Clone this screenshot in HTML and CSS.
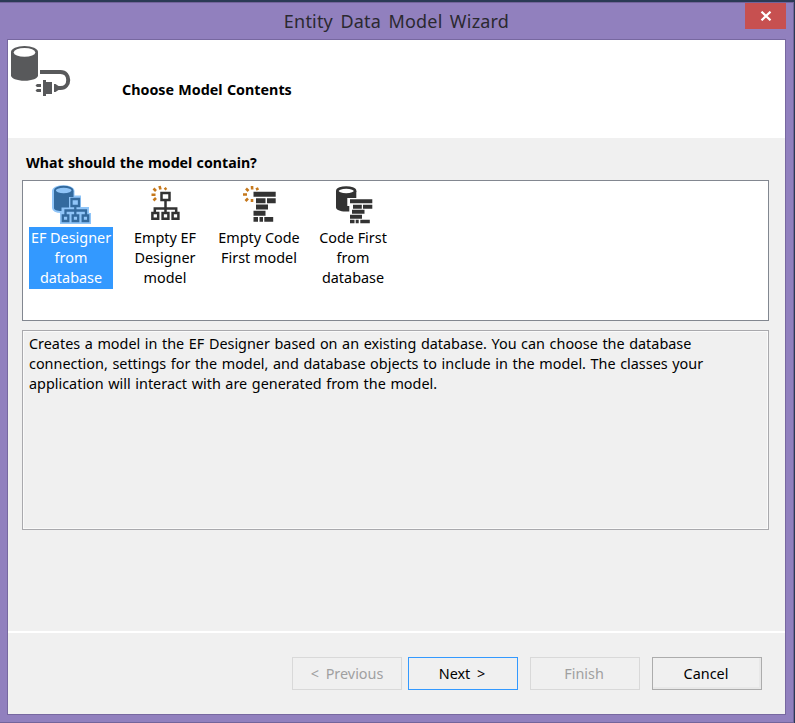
FILE: index.html
```html
<!DOCTYPE html>
<html lang="en">
<head>
<meta charset="utf-8">
<title>Entity Data Model Wizard</title>
<link rel="stylesheet" href="styles.css">
</head>
<body>
<div class="window">
  <header class="titlebar">
    <h1 class="title">Entity Data Model Wizard</h1>
    <button class="close" aria-label="Close">
      <svg width="12" height="10" viewBox="0 0 12 10"><path d="M1.5 .7 10.5 9.3M10.5 .7 1.5 9.3" stroke="#fff" stroke-width="2.2" fill="none"/></svg>
    </button>
  </header>
  <main class="client">
    <section class="banner">
      <svg class="banner-icon" width="64" height="56" viewBox="8 44 64 56">
        <path d="M11 52v23.500c0 2.800 6 5.300 13.500 5.300S38 78.300 38 75.500V52z" fill="#58595b"/>
        <ellipse cx="24.500" cy="52" rx="13.500" ry="6" fill="#58595b"/>
        <ellipse cx="24.500" cy="52.400" rx="10.800" ry="4.400" fill="#fff"/>
        <path d="M40 72h20.500c10.300 0 10.300 16 0 16H57" fill="none" stroke="#58595b" stroke-width="4"/>
        <path d="M54 84h1.500l3 2v4l-3 2H54zM43 80h3v2h6v12h-6v2h-3zM37 84h4v3h-4l-1.500-1.500zM37 89h4v3h-4l-1.500-1.500z" fill="#58595b"/>
      </svg>
      <h2 class="heading">Choose Model Contents</h2>
    </section>
    <section class="body">
      <h3 class="question">What should the model contain?</h3>
      <div class="list">
        <div class="item selected">
          <svg width="40" height="40" viewBox="51 184 40 40">
            <path d="M53 191c0-6.500 20.500-6.500 20.500 0v5.500H80v11.500h8v6h2v9H61v-11c-5 0-8-2-8-4z" fill="#90c5f8" stroke="#90c5f8" stroke-width="2"/>
            <path d="M54 191v17c0 2 3 3 7.500 3v-3.500h7.500V197h4.500v-6z" fill="#336a9e"/>
            <ellipse cx="63.700" cy="190.500" rx="8.800" ry="3.700" fill="#90c5f8" stroke="#336a9e" stroke-width="2"/>
            <g fill="none" stroke="#336a9e" stroke-width="2.300"><path d="M71.500 199h7.500v7h-7.500zM75.300 207v8M65.500 215v-4.500h20.500v4.500M62.800 215.500h5.500v5.500h-5.500zM72.700 215.500h5.500v5.500h-5.500zM82.700 215.500h5.500v5.500h-5.500z"/></g>
          </svg>
          <p class="label"><span>EF Designer</span><span>from</span><span>database</span></p>
        </div>
        <div class="item">
          <svg width="40" height="40" viewBox="145 184 40 40">
            <g fill="none" stroke="#c5781c" stroke-width="2.600"><path d="M159.500 186l1 3.500M153.500 188.500l2.500 2.500M151.500 194.700h4M153.500 200.500l2.500-2.500M164.500 189.500l2-1.500"/></g>
            <g fill="none" stroke="#333" stroke-width="2.500"><path d="M161.500 193h8v7h-8zM165.500 201v12M154.800 213.500v-5h21.400v5M152.400 213h5.800v5.800h-5.800zM162.600 213h5.800v5.800h-5.800zM172.600 213h5.800v5.800h-5.800z"/></g>
          </svg>
          <p class="label"><span>Empty EF</span><span>Designer</span><span>model</span></p>
        </div>
        <div class="item">
          <svg width="40" height="40" viewBox="239 184 40 40">
            <g fill="none" stroke="#c5781c" stroke-width="2.600"><path d="M252 186l.2 3.500M246 188.500l2.500 2.500M243 194.500h4M245.500 201l2.500-2.500M256 189.500l2.500-1.200M252 202v-3"/></g>
            <path d="M253.500 191.800h22.200v5h-22.200zM256 198.200h9.500v5H256zM267 198.200h8.700v5H267zM256 204.600h12v5h-12zM253.500 210.800h12v5h-12zM253.500 217h4.500v4.700h-4.500zM259.500 217h3.500v4.700h-3.500zM264.300 217h8.900v4.700h-8.900z" fill="#333"/>
          </svg>
          <p class="label"><span>Empty Code</span><span>First model</span></p>
        </div>
        <div class="item">
          <svg width="40" height="40" viewBox="333 184 40 40">
            <path d="M336 191v16.500c0 2.300 4 4 9.500 4h3.800v-5.500h-2V198h9v-7z" fill="#333"/>
            <ellipse cx="346.200" cy="191" rx="8.900" ry="3.500" fill="#fff" stroke="#333" stroke-width="2.600"/>
            <path d="M350 199.300h22.300v4H350zM353 204.800h8.800v4H353zM363 204.800h9.300v4H363zM352 209.800h12.500v4H352zM350 214.800h12v4h-12zM350 219.700h4.500v3.500H350zM355.700 219.700h3v3.500h-3zM360.300 219.700h9.500v3.500h-9.500z" fill="#333"/>
          </svg>
          <p class="label"><span>Code First</span><span>from</span><span>database</span></p>
        </div>
      </div>
      <p class="description">
        <span>Creates a model in the EF Designer based on an existing database. You can choose the database</span>
        <span>connection, settings for the model, and database objects to include in the model. The classes your</span>
        <span>application will interact with are generated from the model.</span>
      </p>
    </section>
    <footer class="actions">
      <button class="btn previous" disabled>&lt; Previous</button>
      <button class="btn primary">Next &gt;</button>
      <button class="btn apart" disabled>Finish</button>
      <button class="btn cancel apart">Cancel</button>
    </footer>
  </main>
</div>
</body>
</html>
```
FILE: styles.css
```css
* { box-sizing: border-box; }
body {
  margin: 0;
  height: 723px;
  padding: 2px 1px 0 0;
  overflow: hidden;
  background: #2b3a55;
  font: 14.400px/20px "Noto Sans", "Liberation Sans", sans-serif;
  color: #000;
}
h1, h2, h3, p { margin: 0; font-weight: normal; }
.window {
  height: 721px;
  padding: 0 7px 7px;
  background: #9180be;
  border: 1px solid #73649b;
  border-left: 0;
  display: flex;
  flex-direction: column;
}
.titlebar {
  flex: 0 0 36px;
  display: grid;
  grid-template-columns: 41px 1fr 41px;
  align-items: start;
}
.title {
  grid-column: 2;
  padding-top: 4px;
  text-align: center;
  font-size: 18px;
  line-height: 28px;
  letter-spacing: .2px;
  word-spacing: 2.500px;
  color: #2b2930;
}
.close {
  width: 41px;
  height: 26px;
  padding: 0;
  border: 0;
  background: #c75050;
  display: flex;
  align-items: center;
  justify-content: center;
}
.client {
  flex: 1;
  border: 1px solid #7768a0;
  background: #f0f0f0;
  display: flex;
  flex-direction: column;
}
.banner {
  flex: 0 0 98px;
  padding-top: 4px;
  background: #fff;
  display: flex;
}
.banner-icon { flex: none; }
.heading {
  padding: 36px 0 0 50px;
  font-weight: 700;
  font-size: 14.300px;
  word-spacing: .6px;
}
.body {
  flex: 1;
  padding: 15px 16px 0 14px;
}
.question {
  padding-left: 4px;
  font-weight: 700;
  font-size: 14.200px;
  word-spacing: .6px;
}
.list {
  margin-top: 7px;
  height: 141px;
  padding: 3px 6px;
  border: 1px solid #828790;
  background: #fff;
  display: flex;
  gap: 10px;
}
.item {
  width: 84px;
  display: flex;
  flex-direction: column;
  align-items: center;
}
.item svg { flex: none; }
.label {
  width: 84px;
  margin-top: 3px;
  padding: 1px 0;
  text-align: center;
  white-space: nowrap;
}
.label span, .description span { display: block; }
.selected .label { background: #3399ff; color: #fff; }
.description {
  margin-top: 9px;
  height: 200px;
  padding: 3px 6px;
  border: 1px solid #a9a9ad;
  box-shadow: inset 0 0 0 1px #fafafa;
  white-space: nowrap;
  word-spacing: .850px;
}
.actions {
  flex: 0 0 83px;
  padding: 24px 23px 0 0;
  border-top: 2px solid #fff;
  display: flex;
  justify-content: flex-end;
  gap: 6px;
}
.btn {
  width: 110px;
  height: 33px;
  padding: 0 2px 0 0;
  border: 1px solid #acacac;
  background: #f0f0f0;
  font: inherit;
  word-spacing: 3px;
  color: #000;
}
.btn:disabled { border-color: #d9d9d9; color: #a0a0a0; }
.btn.previous { padding: 0; }
.primary { border-color: #3399ff; }
.cancel { box-shadow: inset -2px -2px 0 #e8e8e8; }
.apart { margin-left: 6px; }
```
